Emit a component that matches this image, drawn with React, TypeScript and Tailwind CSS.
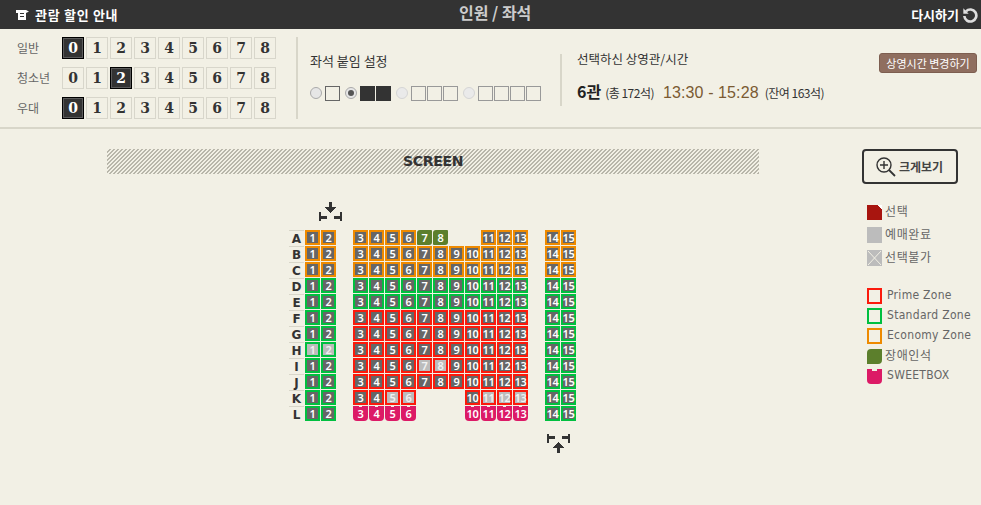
import React from "react";

const KO = "font-['Noto_Sans_CJK_KR','Noto_Sans',sans-serif]";

type Kind = "o" | "g" | "r" | "h" | "s";
type Seat = { n: number; kind: Kind; sold?: boolean };

const ROW_LABELS = ["A", "B", "C", "D", "E", "F", "G", "H", "I", "J", "K", "L"];

function seatKind(row: string, n: number): Kind | null {
  const outer = n <= 2 || n >= 14;
  if (row === "A") {
    if (n === 7 || n === 8) return "h";
    if (n === 9 || n === 10) return null;
    return "o";
  }
  if (row === "B" || row === "C") return "o";
  if (row === "D" || row === "E") return "g";
  if (outer) return "g";
  if (row === "K" && n >= 7 && n <= 9) return null;
  if (row === "L") {
    if (n >= 7 && n <= 9) return null;
    return "s";
  }
  return "r";
}

function isSold(row: string, n: number) {
  if (row === "H") return n === 1 || n === 2;
  if (row === "I") return n === 7 || n === 8;
  if (row === "K") return n === 5 || n === 6 || n === 11 || n === 12 || n === 13;
  return false;
}

const COLUMN: Record<number, string> = {
  1: "col-start-1", 2: "col-start-2", 3: "col-start-4", 4: "col-start-5", 5: "col-start-6",
  6: "col-start-7", 7: "col-start-8", 8: "col-start-9", 9: "col-start-10", 10: "col-start-11",
  11: "col-start-12", 12: "col-start-13", 13: "col-start-14", 14: "col-start-16", 15: "col-start-17",
};

function SeatBox({ seat }: { seat: Seat }) {
  const base = `${COLUMN[seat.n]} relative w-[15px] h-[15px] flex items-center justify-center text-[11px] leading-none font-semibold font-['Noto_Sans',sans-serif] tracking-[-0.2px]`;
  if (seat.kind === "h") {
    return <div className={`${base} bg-[#5c7f2c] text-white rounded-tl-[3px] rounded-br-[3px] rounded-tr-[1px] rounded-bl-[1px]`}>{seat.n}</div>;
  }
  if (seat.kind === "s") {
    return (
      <div className={`${base} bg-[#dc1a66] text-white rounded-b-[4px] before:content-[''] before:absolute before:top-0 before:left-[6px] before:w-[3px] before:h-[1px] before:bg-[#f2f0e5]`}>
        {seat.n}
      </div>
    );
  }
  const border = seat.kind === "o" ? "border-[#ee8a00]" : seat.kind === "g" ? "border-[#00bf3f]" : "border-[#fb1a0c]";
  const fill = seat.sold ? "bg-[#bcbcbc] text-[#f2f2f2]" : "bg-[#666666] text-white";
  return <div className={`${base} border-2 ${border} ${fill}`}>{seat.n}</div>;
}

function CountRow({ label, selected }: { label: string; selected: number }) {
  return (
    <div className="flex items-center h-[22px]">
      <span className={`${KO} w-[62px] text-[12px] text-[#666666] pl-[17px] whitespace-nowrap`}>{label}</span>
      <div className="flex gap-[2px]">
        {[0, 1, 2, 3, 4, 5, 6, 7, 8].map((n) => (
          <div
            key={n}
            className={
              n === selected
                ? "w-[22px] h-[22px] flex items-center justify-center border border-black bg-[#333333] ring-1 ring-inset ring-[#5c5c5c] text-white text-[14px] font-bold font-['DejaVu_Serif',serif]"
                : "w-[22px] h-[22px] flex items-center justify-center border border-[#d8d6cb] text-[#333333] text-[14px] font-bold font-['DejaVu_Serif',serif]"
            }
          >
            {n}
          </div>
        ))}
      </div>
    </div>
  );
}

function Radio({ on, dim }: { on?: boolean; dim?: boolean }) {
  return (
    <span
      className={`w-[12px] h-[12px] rounded-full border flex items-center justify-center ${
        dim ? "border-[#d5d5d5] bg-[#eaeaea]" : "border-[#aaaaaa] bg-[#e6e6e6]"
      }`}
    >
      {on && <span className="w-[6px] h-[6px] rounded-full bg-[#555555]" />}
    </span>
  );
}

function SeatCount({ count, fill, dim }: { count: number; fill?: boolean; dim?: boolean }) {
  return (
    <span className="flex gap-px">
      {Array.from({ length: count }).map((_, i) => (
        <span
          key={i}
          className={`w-[15px] h-[15px] border ${fill ? "bg-[#333333] border-[#333333]" : dim ? "border-[#999999]" : "border-[#666666]"}`}
        />
      ))}
    </span>
  );
}

function PairOption({ count, on, fill, dim }: { count: number; on?: boolean; fill?: boolean; dim?: boolean }) {
  return (
    <div className="flex items-center gap-[3px]">
      <Radio on={on} dim={dim} />
      <SeatCount count={count} fill={fill} dim={dim} />
    </div>
  );
}

function LegendText({ children }: { children: React.ReactNode }) {
  return <span className={`${KO} text-[12px] leading-none text-[#666666] tracking-[0.6px] whitespace-nowrap mb-[3px]`}>{children}</span>;
}

function ZoneText({ children }: { children: React.ReactNode }) {
  return (
    <span className="text-[12px] leading-none text-[#666666] tracking-[0.3px] whitespace-nowrap mb-[2px] font-['DejaVu_Sans_Condensed','Liberation_Sans',sans-serif]">
      {children}
    </span>
  );
}

function EntryIcon({ up }: { up?: boolean }) {
  return (
    <svg width="23" height="19" viewBox="0 0 23 19" className={`block ${up ? "-scale-y-100" : ""}`}>
      <g fill="#333333" shapeRendering="crispEdges">
        <path d="M10 0h3v5h4.5l-6 6-6-6H10z" />
        <rect x="0" y="10" width="2" height="9" />
        <rect x="21" y="10" width="2" height="9" />
        <rect x="0" y="14" width="8" height="3" />
        <rect x="15" y="14" width="8" height="3" />
      </g>
    </svg>
  );
}

export default function App() {
  return (
    <div className="w-[981px] h-[505px] overflow-hidden bg-[#f2f0e5] font-['Liberation_Sans',sans-serif]">
      <header className="h-[29px] bg-[#333333] flex items-center text-white">
        <div className="w-[459px] pl-[16px] flex items-center gap-[6px]">
          <svg width="13" height="10" viewBox="0 0 13 10">
            <path d="M0 0h10l3 1.5-3 1.5v7H2V3H0z M4 3v1h4V3z M4 6v1h4V6z" fill="#ffffff" fillRule="evenodd" />
          </svg>
          <span className={`${KO} text-[13px] font-bold tracking-[0.7px]`}>관람 할인 안내</span>
        </div>
        <div className={`${KO} text-[16px] font-bold text-[#cccccc] -mt-[5px]`}>인원 / 좌석</div>
        <div className="ml-auto pr-[3px] flex items-center gap-[3px]">
          <span className={`${KO} text-[13px] font-bold`}>다시하기</span>
          <svg width="16" height="16" viewBox="0 0 24 24" fill="none" stroke="#dddddd" strokeWidth="4">
            <path d="M6 6.5a9 9 0 1 1-2.5 7" />
            <path d="M2 2v8h8z" fill="#dddddd" stroke="none" />
          </svg>
        </div>
      </header>

      <section className="h-[100px] border-b-2 border-[#d8d6c9] flex items-center">
        <div className="w-[276px] flex flex-col gap-[8px]">
          <CountRow label="일반" selected={0} />
          <CountRow label="청소년" selected={2} />
          <CountRow label="우대" selected={0} />
        </div>
        <div className="w-[2px] h-[82px] ml-[20px] bg-[#d8d6c9]" />
        <div className="w-[250px] pl-[12px] -mt-[2px]">
          <div className={`${KO} text-[13px] leading-none text-[#333333]`}>좌석 붙임 설정</div>
          <div className="flex items-center gap-[5px] mt-[19px]">
            <PairOption count={1} />
            <PairOption count={2} on fill />
            <PairOption count={3} dim />
            <PairOption count={4} dim />
          </div>
        </div>
        <div className="w-[2px] h-[52px] bg-[#d8d6c9] ml-[12px] mt-[4px]" />
        <div className="pl-[15px] mt-[2px]">
          <div className={`${KO} text-[12.5px] leading-none text-[#333333]`}>선택하신 상영관/시간</div>
          <div className="flex items-baseline mt-[13px] whitespace-nowrap">
            <span className={`${KO} text-[16px] font-bold text-[#222222]`}>6관</span>
            <span className={`${KO} text-[12px] text-[#333333] ml-[4px] tracking-[-0.5px]`}>(총 172석)</span>
            <span className="text-[16px] text-[#7a5a32] ml-[9px] tracking-[0.1px]">13:30 - 15:28</span>
            <span className={`${KO} text-[12px] text-[#333333] ml-[6px] tracking-[-0.5px]`}>(잔여 163석)</span>
          </div>
        </div>
        <button className={`${KO} ml-auto mr-[4px] -mt-[30px] w-[98px] h-[20px] bg-[#8f6e5f] border border-[#7d5e50] rounded-[3px] text-[11px] leading-none text-white whitespace-nowrap`}>
          상영시간 변경하기
        </button>
      </section>

      <main className="flex">
        <div className="w-[862px]">
          <div className="ml-[107px] mt-[20px] w-[652px] h-[25px] flex items-center justify-center bg-[length:4px_4px] bg-[linear-gradient(-45deg,#b8b6aa_13%,transparent_13%,transparent_50%,#b8b6aa_50%,#b8b6aa_63%,transparent_63%)]">
            <span className="text-[14px] font-bold text-[#333333] font-['DejaVu_Sans',sans-serif] tracking-[-0.3px]">SCREEN</span>
          </div>
          <div className="ml-[319px] mt-[28px] h-[28px]">
            <EntryIcon />
          </div>
          <div className="ml-[289px] flex">
            <div className="w-[16px] flex flex-col">
              {ROW_LABELS.map((r) => (
                <div
                  key={r}
                  className="w-[15px] h-[16px] border-t border-[#d8d6c9] flex items-center justify-center text-[12px] leading-none font-bold text-[#333333] font-['DejaVu_Sans',sans-serif]"
                >
                  {r}
                </div>
              ))}
            </div>
            <div className="grid grid-cols-[repeat(17,16px)] auto-rows-[16px]">
              {ROW_LABELS.map((r) => (
                <React.Fragment key={r}>
                  {[1, 2, 3, 4, 5, 6, 7, 8, 9, 10, 11, 12, 13, 14, 15].map((n) => {
                    const kind = seatKind(r, n);
                    if (!kind) return null;
                    return <SeatBox key={n} seat={{ n, kind, sold: isSold(r, n) }} />;
                  })}
                </React.Fragment>
              ))}
            </div>
          </div>
          <div className="ml-[547px] mt-[12px]">
            <EntryIcon up />
          </div>
        </div>

        <aside className="w-[119px] pt-[20px]">
          <button className={`${KO} w-[96px] h-[35px] border-2 border-[#333333] rounded-[4px] flex items-center justify-center gap-[3px] text-[12px] font-bold text-[#444444] pr-[1px]`}>
            <svg width="20" height="20" viewBox="0 0 20 20" fill="none" stroke="#333333" strokeWidth="1.4">
              <circle cx="8" cy="8" r="7" />
              <path d="M8 4v8M4 8h8" />
              <path d="M13 13L19 19" strokeWidth="1.8" />
            </svg>
            크게보기
          </button>
          <div className="ml-[5px] mt-[20px] flex flex-col gap-[7px]">
            <div className="flex items-center gap-[3px] h-[16px]">
              <span className="relative w-[15px] h-[15px] bg-[#a8150f]">
                <span className="absolute top-0 right-0 w-[4px] h-[4px] bg-[linear-gradient(45deg,transparent_50%,#ffffff_50%)]" />
              </span>
              <LegendText>선택</LegendText>
            </div>
            <div className="flex items-center gap-[3px] h-[16px]">
              <span className="w-[15px] h-[16px] bg-[#bcbcbc]" />
              <LegendText>예매완료</LegendText>
            </div>
            <div className="flex items-center gap-[3px] h-[16px]">
              <span className="w-[15px] h-[16px] bg-[#bcbcbc]">
                <svg width="15" height="16" viewBox="0 0 15 16" stroke="#f2f0e5" strokeWidth="1">
                  <path d="M1 1l13 14M14 1L1 15" />
                </svg>
              </span>
              <LegendText>선택불가</LegendText>
            </div>
          </div>
          <div className="ml-[5px] mt-[22px] flex flex-col gap-[4px]">
            {[
              ["Prime Zone", "border-[#fb1a0c]"],
              ["Standard Zone", "border-[#00bf3f]"],
              ["Economy Zone", "border-[#ee8a00]"],
            ].map(([t, c]) => (
              <div key={t} className="flex items-center gap-[5px] h-[16px]">
                <span className={`w-[15px] h-[16px] border-2 ${c}`} />
                <ZoneText>{t}</ZoneText>
              </div>
            ))}
            <div className="flex items-center gap-[3px] h-[16px]">
              <span className="w-[15px] h-[15px] bg-[#5c7f2c] rounded-tl-[4px] rounded-br-[4px]" />
              <LegendText>장애인석</LegendText>
            </div>
            <div className="flex items-center gap-[5px] h-[16px]">
              <span className="relative w-[15px] h-[15px] bg-[#dc1a66] rounded-b-[4px] before:content-[''] before:absolute before:top-0 before:left-[5px] before:w-[5px] before:h-[2px] before:bg-[#f2f0e5]" />
              <ZoneText>SWEETBOX</ZoneText>
            </div>
          </div>
        </aside>
      </main>
    </div>
  );
}
